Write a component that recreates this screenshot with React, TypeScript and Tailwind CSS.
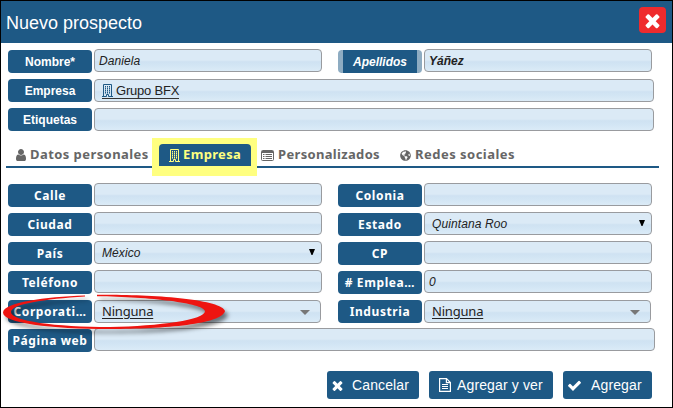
import type { ReactNode } from "react";
import { FaGlobeAmericas } from "react-icons/fa";

const ARIAL = "font-['Liberation_Sans',Arial,sans-serif]";
const LUCIDA = "font-['Noto_Sans','DejaVu_Sans',sans-serif]";

const TIMES =
  "M1490 1322q0 40-28 68l-136 136q-28 28-68 28t-68-28l-294-294-294 294q-28 28-68 28t-68-28l-136-136q-28-28-28-68t28-68l294-294-294-294q-28-28-28-68t28-68l136-136q28-28 68-28t68 28l294 294 294-294q28-28 68-28t68 28l136 136q28 28 28 68t-28 68l-294 294 294 294q28 28 28 68z";
const CHECK =
  "M1671 566q0 40-28 68l-724 724-136 136q-28 28-68 28t-68-28l-136-136-362-362q-28-28-28-68t28-68l136-136q28-28 68-28t68 28l294 295 656-657q28-28 68-28t68 28l136 136q28 28 28 68z";
const USER =
  "M1536 1399q0 109-62.5 187t-150.5 78h-854q-88 0-150.5-78t-62.5-187q0-85 8.5-160.5t31.5-152 58.5-131 94-89 134.500-34.500q131 128 313 128t313-128q76 0 134.500 34.500t94 89 58.500 131 31.500 152 8.500 160.500zm-256-887q0 159-112.500 271.500t-271.500 112.500-271.500-112.500-112.500-271.500 112.500-271.500 271.500-112.500 271.500 112.500 112.500 271.500z";

function Glyph({ d, className, box = "0 0 1792 1792" }: { d: string; className: string; box?: string }) {
  return (
    <svg viewBox={box} className={`shrink-0 ${className}`} fill="currentColor">
      <path d={d} />
    </svg>
  );
}

function Building({ className = "" }: { className?: string }) {
  return (
    <svg viewBox="0 0 11 13" className={`h-[13px] w-[11px] shrink-0 ${className}`} fill="none" stroke="currentColor">
      <path d="M1.500 12V.5h8V12M0 12.500h4.500v-2h2v2H11" />
      <path d="M3.500 2v8M5.500 2v8M7.500 2v8" strokeOpacity=".55" />
      <path d="M3 2.500h5M3 4.500h5M3 6.500h5M3 8.500h5" strokeDasharray="1 1" />
    </svg>
  );
}

function CardIcon() {
  return (
    <svg viewBox="0 0 13 11" className="h-[11px] w-[13px] shrink-0" fill="none" stroke="currentColor">
      <rect x=".5" y=".5" width="12" height="10" rx="1" />
      <path d="M1 2h11" strokeWidth="2" />
      <path d="M2 4.500h1.500M4.500 4.500H11M2 6.500h1.500M4.500 6.500H11M2 8.500h1.500M4.500 8.500H11" />
    </svg>
  );
}

function FileIcon() {
  return (
    <svg viewBox="0 0 12 14" className="h-[14px] w-[12px] shrink-0" fill="none" stroke="currentColor" strokeWidth="1.200">
      <path d="M.6.6h6.900l3.900 3.900v8.900H.6zM7.400.6v4h4" />
      <path d="M3 6.500h6M3 8.500h6M3 10.500h6" strokeWidth="1" />
    </svg>
  );
}

function Label({ children, arial = false }: { children: ReactNode; arial?: boolean }) {
  return (
    <div
      className={`flex h-[23px] w-[84px] shrink-0 items-center justify-center rounded-[4px] bg-[#1e5985] font-bold whitespace-nowrap text-white ${
        arial ? `${ARIAL} text-[12px]` : `${LUCIDA} text-[12px] tracking-[0.6px]`
      }`}
    >
      {children}
    </div>
  );
}

function Field({ children, className = "w-[228px]" }: { children?: ReactNode; className?: string }) {
  return (
    <div
      className={`flex h-[23px] shrink-0 items-center rounded-[4px] border border-[#999b9f] bg-[linear-gradient(#dbeaf6_0%,#dbeaf6_48%,#cfe2f2_56%,#d2e5f4_72%,#dbebf7_100%)] text-[#222] ${className}`}
    >
      {children}
    </div>
  );
}

function Native({ children }: { children: string }) {
  return (
    <>
      <span className="pl-[7px] text-[12px] tracking-[0.1px] italic">{children}</span>
      <svg viewBox="0 0 6 6" className="mr-[6px] mb-px ml-auto h-[6px] w-[6px]" fill="#000">
        <path d="M0 0h6L3.500 6h-1z" />
      </svg>
    </>
  );
}

function Combo() {
  return (
    <>
      <span className={`pl-[7px] text-[13px] underline underline-offset-2 tracking-[-0.2px] ${LUCIDA}`}>Ninguna</span>
      <svg viewBox="0 0 10 5" className="mt-[2px] mr-[10px] ml-auto h-[5px] w-[10px]" fill="#777">
        <path d="M0 0h10L5 5z" />
      </svg>
    </>
  );
}

function Pair({ label, children }: { label: string; children?: ReactNode }) {
  return (
    <div className="flex gap-[2px]">
      <div className="mt-px">
        <Label>{label}</Label>
      </div>
      <Field>{children}</Field>
    </div>
  );
}

export default function App() {
  return (
    <div className={`relative h-[408px] w-[673px] overflow-hidden border border-black bg-white ${ARIAL}`}>
      <header className="flex h-[42px] items-start justify-between bg-[#1e5985] pr-[6px] pl-[5px] text-white">
        <h1 className="mt-[9px] text-[18px] leading-[26px]">Nuevo prospecto</h1>
        <button className="mt-[6px] flex h-[26px] w-[27px] items-center justify-center rounded-[4px] bg-[#ef2b2d]">
          <Glyph d={TIMES} className="h-[21px] w-[21px]" />
        </button>
      </header>

      <section className="pt-[6px] pl-[7px]">
        <div className="flex h-[30px] gap-[16px]">
          <div className="flex gap-[2px]">
            <div className="mt-px">
              <Label arial>Nombre*</Label>
            </div>
            <Field>
              <span className="pl-[4px] text-[12px] tracking-[0.1px] italic">Daniela</span>
            </Field>
          </div>
          <div className="flex gap-[2px]">
            <div className="mt-px flex h-[23px] w-[84px] items-center justify-center rounded-[4px] border-x-[5px] border-[#8eacc2] bg-[#1e5985] text-[12px] font-bold text-white italic">
              Apellidos
            </div>
            <Field>
              <span className="pl-[4px] text-[12px] font-bold italic">Yáñez</span>
            </Field>
          </div>
        </div>
        <div className="flex h-[29px] gap-[2px]">
          <Label arial>Empresa</Label>
          <Field className="w-[560px]">
            <span className="ml-[7px] flex h-[16px] items-center gap-[3px] text-[13px] tracking-[-0.2px] text-[#222] shadow-[0_-1px_0_#333_inset]">
              <Building className="text-[#1e5985]" />
              Grupo BFX
            </span>
          </Field>
        </div>
        <div className="flex h-[29px] gap-[2px]">
          <Label arial>Etiquetas</Label>
          <Field className="h-[22px] w-[560px]" />
        </div>
      </section>

      <nav
        className={`relative isolate ml-[5px] flex h-[31px] w-[653px] border-b-2 border-[#1e5985] text-[13px] font-bold text-[#666] ${LUCIDA}`}
      >
        <div className="absolute top-[1px] left-[146px] -z-10 h-[38px] w-[105px] bg-[#ffff80]" />
        <div className="flex h-[22px] w-[153px] items-center gap-[4px] self-end pl-[10px] whitespace-nowrap">
          <Glyph d={USER} box="256 128 1280 1536" className="h-[12px] w-[10px]" />
          <span className="tracking-[0.43px]">Datos personales</span>
        </div>
        <div className="flex h-[22px] w-[92px] items-center gap-[3px] self-end rounded-t-[4px] bg-[#1e5985] pl-[10px] text-[#ffff80]">
          <Building />
          <span className="tracking-[0.35px]">Empresa</span>
        </div>
        <div className="flex h-[22px] items-center gap-[4px] self-end pl-[10px]">
          <CardIcon />
          <span className="w-[102px] tracking-[0.33px]">Personalizados</span>
        </div>
        <div className="flex h-[22px] items-center gap-[4px] self-end pl-[20px]">
          <FaGlobeAmericas className="h-[11px] w-[11px]" />
          <span className="tracking-[0.48px]">Redes sociales</span>
        </div>
      </nav>

      <section className="pt-[15px] pl-[7px]">
        <div className="flex h-[29px] gap-[16px]">
          <Pair label="Calle" />
          <Pair label="Colonia" />
        </div>
        <div className="flex h-[29px] gap-[16px]">
          <Pair label="Ciudad" />
          <Pair label="Estado">
            <Native>Quintana Roo</Native>
          </Pair>
        </div>
        <div className="flex h-[29px] gap-[16px]">
          <Pair label="País">
            <Native>México</Native>
          </Pair>
          <Pair label="CP" />
        </div>
        <div className="flex h-[30px] gap-[16px]">
          <Pair label="Teléfono" />
          <Pair label="# Emplea…">
            <span className="pl-[4px] text-[12px] italic">0</span>
          </Pair>
        </div>
        <div className="flex h-[28px] gap-[17px]">
          <div className="flex gap-[2px]">
            <Label>Corporati…</Label>
            <Field className="w-[227px]">
              <Combo />
            </Field>
          </div>
          <div className="flex gap-[2px]">
            <Label>Industria</Label>
            <Field className="w-[227px]">
              <Combo />
            </Field>
          </div>
        </div>
        <div className="flex gap-[2px]">
          <div className="mt-px">
            <Label>Página web</Label>
          </div>
          <Field className="w-[561px]" />
        </div>
      </section>

      <footer className="mt-[19px] flex justify-end gap-[10px] pr-[20px] text-[14px] tracking-[0.13px] text-white">
        <button className="flex h-[28px] w-[92px] items-center rounded-[3px] bg-[#1e5985] pl-[3px]">
          <Glyph d={TIMES} className="mr-[7px] h-[15px] w-[15px]" />
          Cancelar
        </button>
        <button className="flex h-[28px] w-[124px] items-center rounded-[3px] bg-[#1e5985] pl-[10px] whitespace-nowrap">
          <span className="mr-[6px]">
            <FileIcon />
          </span>
          Agregar y ver
        </button>
        <button className="flex h-[28px] w-[89px] items-center rounded-[3px] bg-[#1e5985] pl-[4px]">
          <Glyph d={CHECK} className="mr-[9px] h-[15px] w-[15px]" />
          Agregar
        </button>
      </footer>

      <svg
        viewBox="0 284 240 56"
        className="pointer-events-none absolute top-[283px] -left-px h-[56px] w-[240px] drop-shadow-[3px_4px_2px_rgba(0,0,0,0.5)]"
        fill="#ee1410"
      >
        <path d="M97 294.700C150 294 222 299 225 311C222 324 165 329 110 329C50 329 3 323 3 312.500C4 302 45 297 85 295.500V296.500C45 299 11 304 11 312C11 321 55 327 110 327C160 326 205 320 205 311C203 303 150 297 97 296.300Z" />
      </svg>
    </div>
  );
}
